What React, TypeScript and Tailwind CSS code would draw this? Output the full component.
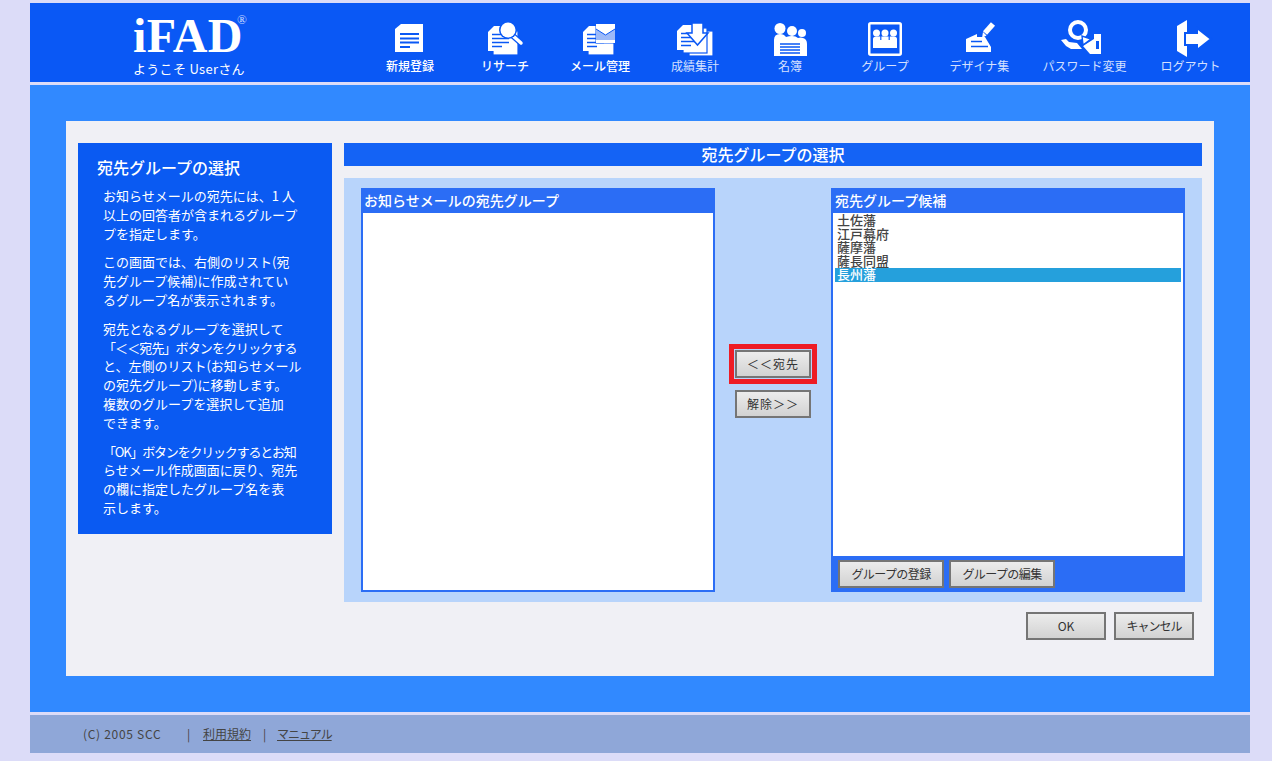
import type { ReactNode } from "react";

const FONT = "font-['Noto_Sans_CJK_JP','Noto_Sans',sans-serif]";
const BLUE = "#0a58f5";

function Doc({ x = 5, y = 6, w = 25, h = 25 }: { x?: number; y?: number; w?: number; h?: number }) {
  return (
    <>
      <path d={`M${x + 6} ${y}H${x + w}V${y + h}H${x}V${y + 6}Z`} fill="#fff" />
      <path d={`M${x + 4} ${y + 8.5}h${w - 10}M${x + 4} ${y + 12.5}h${w - 8}M${x + 4} ${y + 16.5}h${w - 8}M${x + 4} ${y + 20.5}h${w - 15}`} stroke={BLUE} strokeWidth="1.5" fill="none" />
    </>
  );
}

function Back({ x, y, w, h }: { x: number; y: number; w: number; h: number }) {
  return <rect x={x} y={y} width={w} height={h} fill="#fff" stroke={BLUE} strokeWidth="1.2" />;
}

const ICONS: Record<string, ReactNode> = {
  new: (
    <>
      <path d="M13 4H35V32H7V9Z" fill="#fff" />
      <path d="M12 14h19M12 18.5h19M12 22.5h19M12 27h10" stroke={BLUE} strokeWidth="2" fill="none" />
    </>
  ),
  research: (
    <>
      <Back x={10} y={11} w={25} h={24} />
      <Doc />
      <path d="M29 15L38 23" stroke={BLUE} strokeWidth="6" />
      <path d="M29 15L38 23" stroke="#fff" strokeWidth="3.5" strokeLinecap="round" />
      <circle cx="25" cy="10" r="9" fill={BLUE} />
      <circle cx="25" cy="10" r="7.5" fill="#fff" />
    </>
  ),
  mail: (
    <>
      <Back x={10} y={11} w={26} h={24} />
      <Doc />
      <rect x="17.5" y="3.5" width="20" height="20" fill={BLUE} />
      <rect x="18" y="4" width="19" height="19" fill="#fff" />
      <path d="M18 9L27.5 15L37 9V20H18Z" fill="#9cb9f8" />
      <path d="M18 9L27.5 15L37 9" stroke={BLUE} strokeWidth="1" fill="none" />
    </>
  ),
  score: (
    <>
      <Back x={16} y={11} w={24} h={25} />
      <Back x={10} y={8} w={24} h={25} />
      <Doc x={4} y={5} />
      <path d="M19 3H30V13H35L24.5 25L14 13H19Z" fill="#fff" stroke={BLUE} strokeWidth="1.5" />
    </>
  ),
  list: (
    <>
      <circle cx="12" cy="8.5" r="5.5" fill="#fff" />
      <circle cx="24" cy="11" r="5" fill="#fff" />
      <circle cx="34" cy="13" r="4" fill="#fff" />
      <path d="M6 36V20Q6 14 12 14Q16 14 18 17Q21 16 24 16Q28 16 30 18Q33 17 35 18Q39 19 39 24V36Z" fill="#fff" />
      <path d="M12 24h20M12 27h20M12 30h20M12 33h20" stroke={BLUE} strokeWidth="1.5" fill="none" />
    </>
  ),
  group: (
    <>
      <rect x="6.25" y="3.25" width="31.5" height="31.5" rx="1.5" fill="none" stroke="#fff" strokeWidth="2.5" />
      <circle cx="13.5" cy="13" r="3.5" fill="#fff" />
      <circle cx="22" cy="13" r="3.5" fill="#fff" />
      <circle cx="30.5" cy="13" r="3.5" fill="#fff" />
      <path d="M10 28V19Q10 16.5 13 16.5H31Q34 16.5 34 19V28Z" fill="#fff" />
      <path d="M17.8 15V20M26.2 15V20" stroke={BLUE} strokeWidth="1.2" />
    </>
  ),
  design: (
    <>
      <path d="M8 19L19 14V17L27 17L33 27V32H8Z" fill="#fff" />
      <path d="M13 21.5H24M13 26.5H30" stroke={BLUE} strokeWidth="1.6" fill="none" />
      <path d="M27 13L35 4" stroke="#fff" strokeWidth="5.5" />
      <path d="M25 12L28.5 15.5L24 18Z" fill="#fff" />
    </>
  ),
  password: (
    <>
      <circle cx="15" cy="10" r="8" fill="none" stroke="#fff" strokeWidth="4" />
      <path d="M-2 20L3 19L6 22L14 23L19 29L8 29L3 26Z" fill="#fff" />
      <path d="M20 26L31 19V14H38V34H27Z" fill="#fff" />
      <path d="M33 21H36V29H33Z" fill={BLUE} />
      <path d="M19 16L20 25L28 19Z" fill="#fff" stroke={BLUE} strokeWidth="1.4" />
    </>
  ),
  logout: (
    <>
      <path d="M8 6L18 0V37L8 31Z" fill="#fff" />
      <path d="M16 13H28V8L42 19L28 30V25H16Z" fill="#fff" stroke={BLUE} strokeWidth="2" />
    </>
  ),
};

const NAV = [
  { key: "new", label: "新規登録", width: "w-[95px]", strong: true },
  { key: "research", label: "リサーチ", width: "w-[95px]", strong: true },
  { key: "mail", label: "メール管理", width: "w-[95px]", strong: true },
  { key: "score", label: "成績集計", width: "w-[95px]", strong: false },
  { key: "list", label: "名簿", width: "w-[95px]", strong: false },
  { key: "group", label: "グループ", width: "w-[95px]", strong: false },
  { key: "design", label: "デザイナ集", width: "w-[94px]", strong: false },
  { key: "password", label: "パスワード変更", width: "w-[116px]", strong: false },
  { key: "logout", label: "ログアウト", width: "w-[96px]", strong: false },
];

const HELP = [
  ["お知らせメールの宛先には、1 人", "以上の回答者が含まれるグループ", "プを指定します。"],
  ["この画面では、右側のリスト(宛", "先グループ候補)に作成されてい", "るグループ名が表示されます。"],
  ["宛先となるグループを選択して", "「＜＜宛先」ボタンをクリックする", "と、左側のリスト(お知らせメール", "の宛先グループ)に移動します。", "複数のグループを選択して追加", "できます。"],
  ["「OK」ボタンをクリックするとお知", "らせメール作成画面に戻り、宛先", "の欄に指定したグループ名を表", "示します。"],
];

const GROUPS = ["土佐藩", "江戸幕府", "薩摩藩", "薩長同盟", "長州藩"];

function Btn({ className, children }: { className: string; children: ReactNode }) {
  return (
    <button className={`${className} h-[28px] shrink-0 border-2 border-[#757575] bg-gradient-to-b from-[#ececec] to-[#d2d2d2] text-[12px] leading-none text-[#333] whitespace-nowrap`}>
      {children}
    </button>
  );
}

function Header() {
  return (
    <header className="flex h-[79px] bg-[#0a58f5]">
      <div className="w-[332.5px] shrink-0 pl-[103px]">
        <div className="relative h-[50px] w-[112px] pt-[9px] font-['Liberation_Serif',serif] text-[48px] font-bold leading-[47px] tracking-[0.3px] text-white">
          iFAD
          <span className="absolute left-[104px] top-[10px] text-[13px] leading-none font-normal text-[#c8d8ff]">®</span>
        </div>
        <div className="mt-[8px] whitespace-nowrap text-[13px] leading-[16px] tracking-[0.3px] text-white">ようこそ Userさん</div>
      </div>
      <nav className="flex">
        {NAV.map((item) => (
          <a key={item.key} className={`${item.width} flex flex-col items-center pt-[17px]`}>
            <svg width="44" height="38" viewBox="0 0 44 38" className="overflow-visible">{ICONS[item.key]}</svg>
            <span className={`whitespace-nowrap text-[12px] leading-[16px] ${item.strong ? "font-medium text-white" : "text-[#d5e0ff]"}`}>
              {item.label}
            </span>
          </a>
        ))}
      </nav>
    </header>
  );
}

function HelpBox() {
  return (
    <aside className="h-[391px] w-[254px] shrink-0 bg-[#0a5af2] pl-[19px] pt-[14px] text-white">
      <h2 className="text-[16px] font-medium leading-[21px]">宛先グループの選択</h2>
      <div className="mt-[9px] pl-[6px] text-[13px] leading-[18.8px]">
        {HELP.map((lines, i) => (
          <p key={i} className="mb-[10px]">
            {lines.map((line) => (
              <span
                key={line}
                className={`block whitespace-nowrap ${line.startsWith("「＜") ? "tracking-[-0.9px]" : line.startsWith("「O") ? "tracking-[-1.2px]" : ""}`}
              >
                {line}
              </span>
            ))}
          </p>
        ))}
      </div>
    </aside>
  );
}

function Selector() {
  return (
    <section className="flex-1">
      <h1 className="h-[23px] bg-[#1463f5] text-center text-[16px] font-medium leading-[23px] text-white">宛先グループの選択</h1>
      <div className="mt-[12px] flex h-[424px] bg-[#b8d4fb] pl-[17px] pt-[10px]">
        <div className="flex h-[404px] w-[354px] shrink-0 flex-col bg-[#2b6df5] px-[2px] pb-[2px]">
          <div className="h-[25px] pl-[1px] text-[14px] font-medium leading-[25px] text-white">お知らせメールの宛先グループ</div>
          <div className="flex-1 bg-white" />
        </div>
        <div className="w-[116px] shrink-0 pl-[14px] pt-[156px]">
          <div className="h-[40px] w-[88px] border-[5px] border-[#ee1c25] p-px">
            <Btn className="w-[76px] tracking-[1px]">＜＜宛先</Btn>
          </div>
          <Btn className="ml-[6px] mt-[6px] w-[76px] tracking-[1px]">解除＞＞</Btn>
        </div>
        <div className="flex h-[404px] w-[354px] shrink-0 flex-col bg-[#2b6df5] px-[2px]">
          <div className="h-[25px] pl-[2px] text-[14px] font-medium leading-[25px] text-white">宛先グループ候補</div>
          <ul className="h-[343px] bg-white px-[2px] pt-[1px] text-[13px] font-medium">
            {GROUPS.map((name, i) => (
              <li key={name} className={`h-[13.5px] pl-[2px] leading-[12.5px] ${i === 4 ? "bg-[#25a0dc] text-white" : "text-[#444]"}`}>
                {name}
              </li>
            ))}
          </ul>
          <div className="flex gap-[5px] pl-[5px] pt-[4px]">
            <Btn className="w-[106px] tracking-[-0.6px]">グループの登録</Btn>
            <Btn className="w-[106px] tracking-[-0.6px]">グループの編集</Btn>
          </div>
        </div>
      </div>
      <div className="mt-[10px] flex justify-end gap-[8px] pr-[8px]">
        <Btn className="w-[80px]">OK</Btn>
        <Btn className="w-[80px] tracking-[-1px]">キャンセル</Btn>
      </div>
    </section>
  );
}

function Footer() {
  return (
    <footer className="mt-[3px] flex h-[38px] items-center bg-[#8fa7d8] pl-[53px] text-[12px] text-[#444]">
      <span className="w-[104px] tracking-[0.7px]">(C) 2005 SCC</span>
      <span className="w-[16px]">|</span>
      <a className="underline">利用規約</a>
      <span className="ml-[12px] w-[14px]">|</span>
      <a className="tracking-[-1px] underline">マニュアル</a>
    </footer>
  );
}

export default function App() {
  return (
    <div className={`${FONT} h-[761px] overflow-hidden bg-[#dcdcf8] pl-[30px] pr-[22px] pt-[3px]`}>
      <Header />
      <main className="mt-[3px] h-[627px] bg-[#3189ff] px-[36px] pt-[36px]">
        <div className="flex h-[555px] gap-[12px] bg-[#f0f0f5] px-[12px] pt-[22px]">
          <HelpBox />
          <Selector />
        </div>
      </main>
      <Footer />
    </div>
  );
}
